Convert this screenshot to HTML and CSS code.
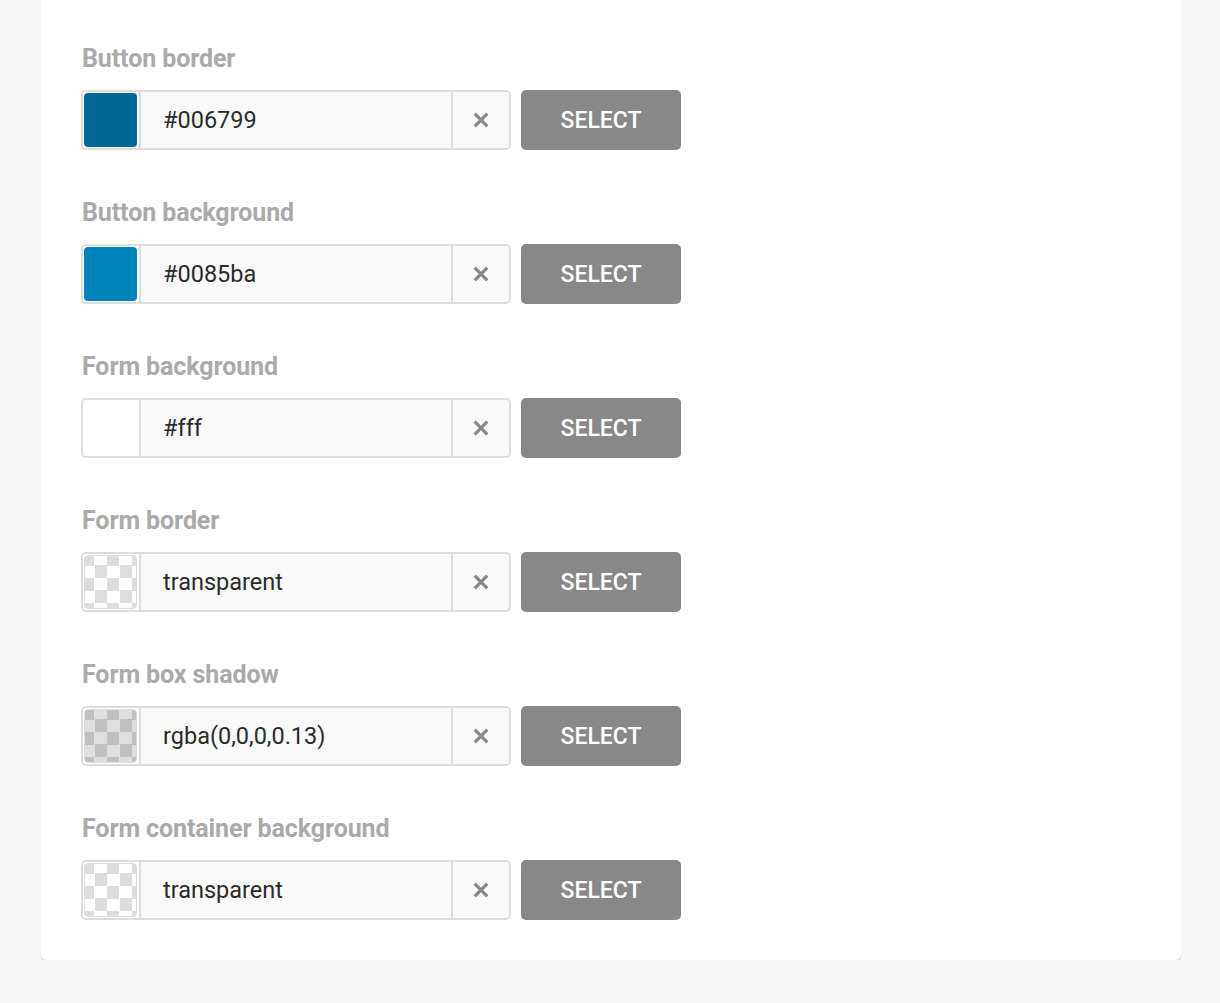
FILE: index.html
```html
<!DOCTYPE html>
<html lang="en">
<head>
  <meta charset="UTF-8">
  <title>Form colours</title>
  <link rel="stylesheet" href="styles.css">
</head>
<body>
  <div class="card">
    <div class="field">
      <label class="label">Button border</label>
      <div class="row">
        <div class="picker">
          <div class="swatch"><span class="chip" style="background-color: #006799"></span></div>
          <input class="value" type="text" value="#006799">
          <button class="clear" type="button"><svg viewBox="0 0 14 14" width="15" height="15"><path d="M1.5 1.5 L12.5 12.5 M12.5 1.5 L1.5 12.5"/></svg></button>
        </div>
        <button class="select" type="button">SELECT</button>
      </div>
    </div>
    <div class="field">
      <label class="label">Button background</label>
      <div class="row">
        <div class="picker">
          <div class="swatch"><span class="chip" style="background-color: #0085ba"></span></div>
          <input class="value" type="text" value="#0085ba">
          <button class="clear" type="button"><svg viewBox="0 0 14 14" width="15" height="15"><path d="M1.5 1.5 L12.5 12.5 M12.5 1.5 L1.5 12.5"/></svg></button>
        </div>
        <button class="select" type="button">SELECT</button>
      </div>
    </div>
    <div class="field">
      <label class="label">Form background</label>
      <div class="row">
        <div class="picker">
          <div class="swatch"><span class="chip" style="background-color: #fff"></span></div>
          <input class="value" type="text" value="#fff">
          <button class="clear" type="button"><svg viewBox="0 0 14 14" width="15" height="15"><path d="M1.5 1.5 L12.5 12.5 M12.5 1.5 L1.5 12.5"/></svg></button>
        </div>
        <button class="select" type="button">SELECT</button>
      </div>
    </div>
    <div class="field">
      <label class="label">Form border</label>
      <div class="row">
        <div class="picker">
          <div class="swatch"><span class="chip checker"></span></div>
          <input class="value" type="text" value="transparent">
          <button class="clear" type="button"><svg viewBox="0 0 14 14" width="15" height="15"><path d="M1.5 1.5 L12.5 12.5 M12.5 1.5 L1.5 12.5"/></svg></button>
        </div>
        <button class="select" type="button">SELECT</button>
      </div>
    </div>
    <div class="field">
      <label class="label">Form box shadow</label>
      <div class="row">
        <div class="picker">
          <div class="swatch"><span class="chip checker shade"></span></div>
          <input class="value" type="text" value="rgba(0,0,0,0.13)">
          <button class="clear" type="button"><svg viewBox="0 0 14 14" width="15" height="15"><path d="M1.5 1.5 L12.5 12.5 M12.5 1.5 L1.5 12.5"/></svg></button>
        </div>
        <button class="select" type="button">SELECT</button>
      </div>
    </div>
    <div class="field">
      <label class="label">Form container background</label>
      <div class="row">
        <div class="picker">
          <div class="swatch"><span class="chip checker"></span></div>
          <input class="value" type="text" value="transparent">
          <button class="clear" type="button"><svg viewBox="0 0 14 14" width="15" height="15"><path d="M1.5 1.5 L12.5 12.5 M12.5 1.5 L1.5 12.5"/></svg></button>
        </div>
        <button class="select" type="button">SELECT</button>
      </div>
    </div>
  </div>
</body>
</html>
```

FILE: styles.css
```css
* {
  margin: 0px;
  padding: 0px;
  box-sizing: border-box;
}

body {
  background-color: #f7f7f7;
  font-family: Roboto, "Liberation Sans", sans-serif;
}

.card {
  width: 1140px;
  margin-left: 41px;
  padding: 43px 40px 40px 40px;
  background-color: white;
  border-radius: 0 0 6px 6px;
  box-shadow: 0 4px 0 #e2e2e2;
  display: flex;
  flex-direction: column;
  gap: 47px;
}

.field {
  display: flex;
  flex-direction: column;
  gap: 16px;
}

.label {
  display: block;
  height: 31px;
  line-height: 31px;
  font-size: 25px;
  font-weight: 700;
  color: #aaaaaa;
  padding-left: 1px;
  letter-spacing: -0.1px;
}

.row {
  display: flex;
  flex-direction: row;
  gap: 10px;
}

.picker {
  display: flex;
  width: 430px;
  height: 60px;
  border: 2px solid #dddddd;
  border-radius: 5px;
  background-color: #f9f9f9;
  overflow: hidden;
}

.swatch {
  width: 58px;
  flex: none;
  padding: 1px 2px 1px 1px;
  background-color: white;
  border-right: 2px solid #dddddd;
}

.chip {
  display: block;
  width: 100%;
  height: 100%;
  border-radius: 4px;
  border: 1px solid #dddddd;
}

.chip[style] {
  border-color: transparent;
}

.checker {
  background-color: white;
  background-image: conic-gradient(transparent 25%, #dddddd 0 50%, transparent 0 75%, #dddddd 0);
  background-size: 25px 25px;
  background-position: -3px -3px;
}

.shade {
  background-image: linear-gradient(rgba(0,0,0,0.13), rgba(0,0,0,0.13)), conic-gradient(transparent 25%, #dddddd 0 50%, transparent 0 75%, #dddddd 0);
  background-size: auto, 25px 25px;
}

.value {
  flex: 1;
  min-width: 0;
  border: none;
  outline: none;
  background: transparent;
  padding-left: 22px;
  font-family: Roboto, "Liberation Sans", sans-serif;
  font-size: 23.5px;
  color: #2b2b2b;
}

.clear {
  width: 58px;
  flex: none;
  border: none;
  border-left: 2px solid #dddddd;
  background: transparent;
  display: flex;
  align-items: center;
  justify-content: center;
}

.clear svg {
  width: 16px;
  height: 16px;
}

.clear svg path {
  fill: none;
  stroke: #8a8784;
  stroke-width: 2.8;
}

.select {
  width: 160px;
  height: 60px;
  border: none;
  border-radius: 5px;
  background-color: #888888;
  color: white;
  font-family: Roboto, "Liberation Sans", sans-serif;
  font-size: 23px;
  font-weight: 500;
}
```
